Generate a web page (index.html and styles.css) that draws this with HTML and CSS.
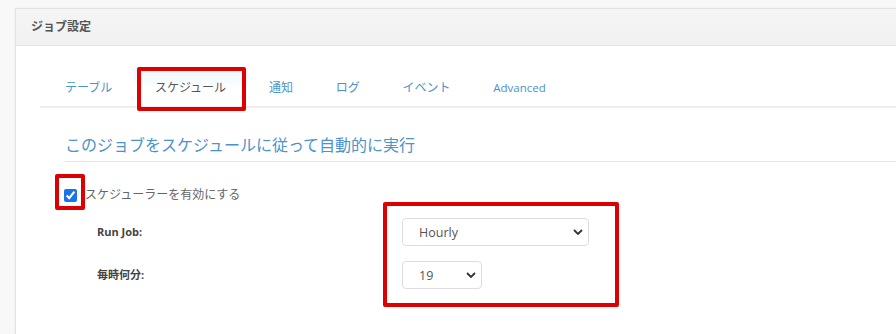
FILE: index.html
```html
<!DOCTYPE html>
<html lang="ja">
<head>
  <meta charset="UTF-8">
  <title>ジョブ設定</title>
  <link rel="stylesheet" href="styles.css">
</head>
<body>
<div class="panel">
  <div class="panel-heading">ジョブ設定</div>

  <div class="panel-body">
    <ul class="tabs">
      <li><a href="#">テーブル</a></li>
      <li class="active marked"><a href="#">スケジュール</a></li>
      <li><a href="#">通知</a></li>
      <li><a href="#">ログ</a></li>
      <li><a href="#">イベント</a></li>
      <li><a href="#" class="latin">Advanced</a></li>
    </ul>

    <div class="tab-content">
      <h2 class="section-title">このジョブをスケジュールに従って自動的に実行</h2>

      <label class="check-row">
        <span class="check-mark marked"><input type="checkbox" checked></span>
        <span>スケジューラーを有効にする</span>
      </label>

      <div class="schedule-form">
        <div class="form-labels">
          <div class="form-label">Run Job:</div>
          <div class="form-label">毎時何分:</div>
        </div>
        <div class="form-controls marked">
          <div class="select-wrap wide">
            <select>
              <option>Hourly</option>
              <option>Daily</option>
              <option>Weekly</option>
            </select>
            <svg class="chevron" viewBox="0 0 10 6" width="10" height="6"><path d="M1 1l4 4 4-4" fill="none" stroke="#333" stroke-width="1.8"/></svg>
          </div>
          <div class="select-wrap narrow">
            <select>
              <option>19</option>
            </select>
            <svg class="chevron" viewBox="0 0 10 6" width="10" height="6"><path d="M1 1l4 4 4-4" fill="none" stroke="#333" stroke-width="1.8"/></svg>
          </div>
        </div>
      </div>
    </div>
  </div>
</div>
</body>
</html>
```

FILE: styles.css
```css
:root {
  --blue: #4a93cc;
  --text: #555;
  --label: #444;
  --border: #e5e5e5;
  --mark: #dc0000;
}

* {
  margin: 0;
  padding: 0;
  box-sizing: border-box;
}

body {
  font-family: 'Open Sans', 'Noto Sans CJK JP', sans-serif;
  background: #f8f8f8;
  color: var(--text);
  height: 334px;
  overflow: hidden;
  padding: 8px 0 0 15px;
}

.panel {
  background: #fff;
  border: 1px solid #e2e2e2;
  border-right: none;
  border-bottom: none;
  height: 326px;
  box-shadow: 0 0 3px rgba(0, 0, 0, 0.05);
}

.panel-heading {
  height: 37px;
  line-height: 36px;
  padding-left: 15px;
  background: linear-gradient(#f5f5f5, #f1f1f1);
  border-bottom: 1px solid #e3e3e3;
  font-size: 12px;
  font-weight: 700;
  color: #555;
}

.panel-body {
  padding: 22px 0 0 24px;
}

/* Tabs */
.tabs {
  list-style: none;
  display: flex;
  border-bottom: 2px solid #eee;
  padding-left: 3.5px;
}

.tabs a {
  display: block;
  padding: 11px 21.4px 9px;
  line-height: 18px;
  font-size: 12px;
  color: var(--blue);
  text-decoration: none;
}

.tabs .latin {
  font-size: 11.5px;
}

.tabs .active a {
  color: #555;
  background: linear-gradient(#eef6fc, #fff 60%);
}

.marked {
  position: relative;
}

.marked::after {
  content: '';
  position: absolute;
  border: 4px solid var(--mark);
  border-radius: 2px;
  pointer-events: none;
}

.tabs .marked::after {
  top: -1px;
  bottom: -5px;
  left: 3px;
  right: 2px;
}

/* Tab content */
.tab-content {
  padding-left: 25px;
}

.section-title {
  margin-top: 25px;
  padding-bottom: 4px;
  border-bottom: 1px solid var(--border);
  font-size: 16px;
  font-weight: 400;
  line-height: 24px;
  color: var(--blue);
}

.check-row {
  display: flex;
  align-items: center;
  margin-top: 23px;
  line-height: 20px;
  font-size: 12px;
  color: #666;
}

.check-mark {
  display: flex;
  margin: 0 8px 0 -1px;
}

.check-mark input {
  width: 13px;
  height: 13px;
  margin: 0;
  accent-color: #1a73e8;
}

.check-mark::after {
  top: -15px;
  bottom: -8px;
  left: -9px;
  right: -8px;
}

.schedule-form {
  display: flex;
  margin-top: 13px;
  padding-left: 32px;
}

.form-labels,
.form-controls {
  display: flex;
  flex-direction: column;
  gap: 15px;
}

.form-labels {
  width: 305px;
}

.form-label {
  height: 28px;
  line-height: 28px;
  font-size: 11px;
  font-weight: 700;
  color: var(--label);
}

.form-controls::after {
  top: -16px;
  bottom: -18px;
  left: -19px;
  right: -30px;
}

.select-wrap {
  position: relative;
  height: 28px;
}

.select-wrap.wide {
  width: 187px;
}

.select-wrap.narrow {
  width: 80px;
}

.select-wrap select {
  appearance: none;
  width: 100%;
  height: 100%;
  padding-left: 16px;
  border: 1px solid #ddd;
  border-radius: 4px;
  background: #fff;
  font-family: inherit;
  font-size: 12.5px;
  color: #555;
}

.chevron {
  position: absolute;
  right: 6px;
  top: 11px;
}
```
